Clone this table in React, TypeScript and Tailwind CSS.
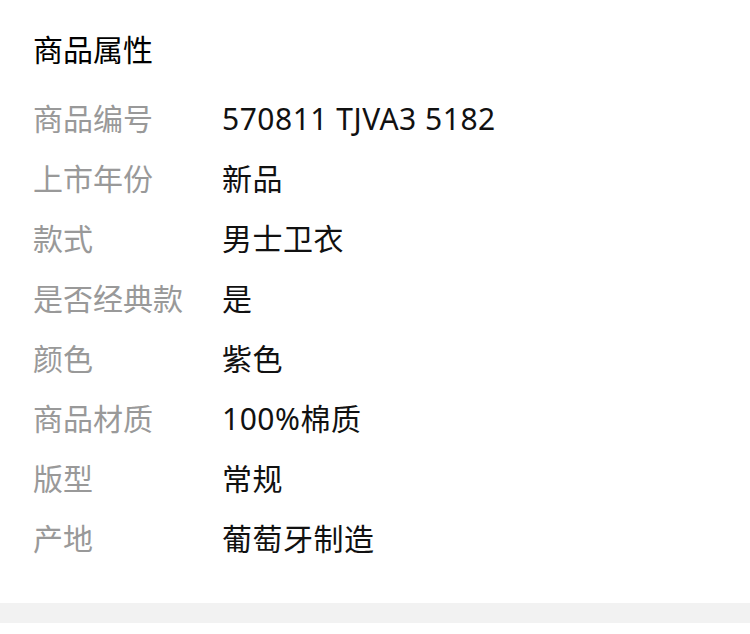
const rows = [
  { label: '商品编号', value: '570811 TJVA3 5182' },
  { label: '上市年份', value: '新品' },
  { label: '款式', value: '男士卫衣' },
  { label: '是否经典款', value: '是' },
  { label: '颜色', value: '紫色' },
  { label: '商品材质', value: '100%棉质' },
  { label: '版型', value: '常规' },
  { label: '产地', value: '葡萄牙制造' },
]

export default function App() {
  return (
    <div
      className="w-[750px] h-[634px] bg-white"
      style={{ fontFamily: '"Noto Sans", "Noto Sans CJK SC", sans-serif' }}
    >
      <div className="pt-5 pl-[33px] pb-[35px]">
        <h2 className="h-[60px] leading-[60px] text-[30px] text-black">商品属性</h2>
        <div className="mt-2 flex flex-col">
          {rows.map((row) => (
            <div key={row.label} className="flex h-[60px] items-center text-[30px]">
              <span className="w-[189px] shrink-0 text-[#999]">{row.label}</span>
              <span className="text-[#111] tracking-[0.5px]">{row.value}</span>
            </div>
          ))}
        </div>
      </div>
      <div className="h-5 bg-[#f2f2f2]" />
    </div>
  )
}
